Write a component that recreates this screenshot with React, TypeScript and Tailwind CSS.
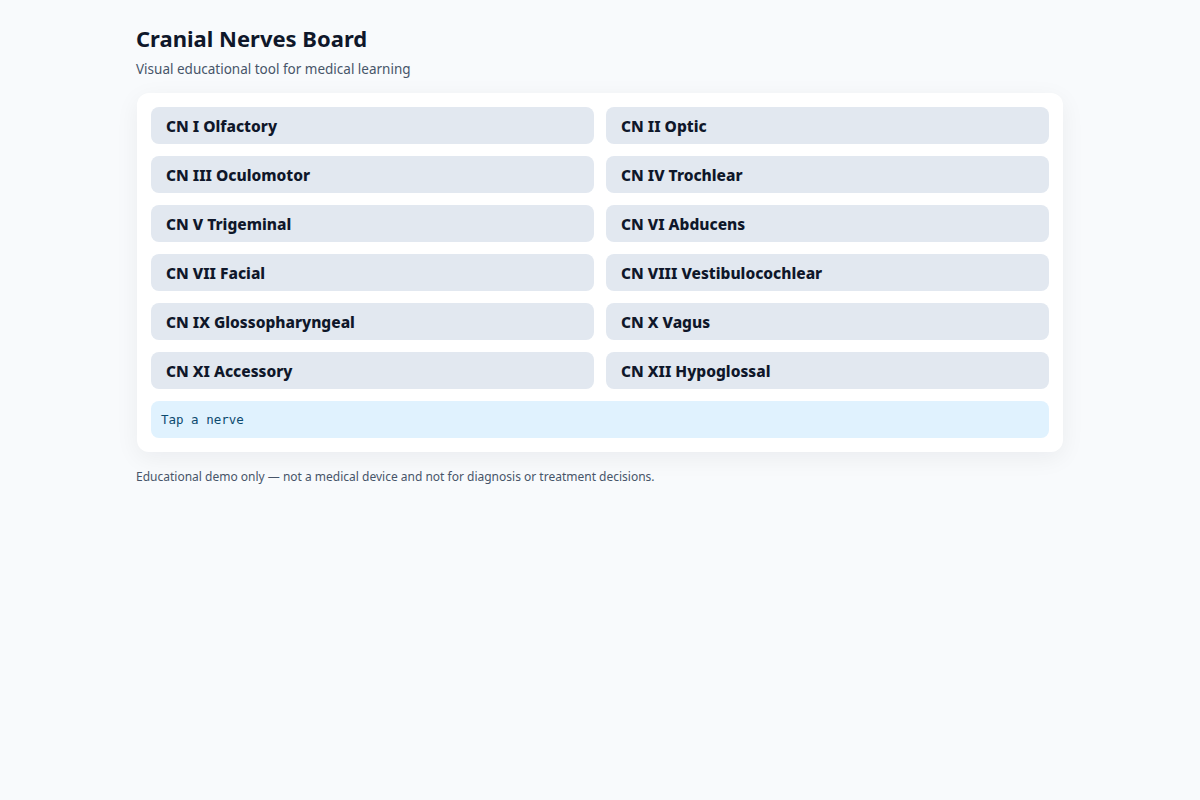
import React, { useState } from 'react';

const nerves = [
  'CN I Olfactory',
  'CN II Optic',
  'CN III Oculomotor',
  'CN IV Trochlear',
  'CN V Trigeminal',
  'CN VI Abducens',
  'CN VII Facial',
  'CN VIII Vestibulocochlear',
  'CN IX Glossopharyngeal',
  'CN X Vagus',
  'CN XI Accessory',
  'CN XII Hypoglossal',
];

export default function App() {
  const [selected, setSelected] = useState<string | null>(null);

  return (
    <div className="min-h-screen bg-[#f8fafc] font-['Noto_Sans',sans-serif] text-[#0f172a]">
      <main className="mx-auto w-[928px] pt-[23px]">
        <h1 className="text-[22px] font-bold leading-[30px]">Cranial Nerves Board</h1>
        <p className="mt-[7px] text-[13.5px] leading-[18px] text-[#475569]">
          Visual educational tool for medical learning
        </p>

        <div className="mx-[1px] mt-[15px] rounded-[12px] bg-white p-[14px] shadow-[0_6px_24px_rgba(15,23,42,0.06)]">
          <div className="grid grid-cols-2 gap-[12px]">
            {nerves.map((name) => (
              <button
                key={name}
                onClick={() => setSelected(name)}
                className="h-[37px] rounded-[8px] bg-[#e2e8f0] px-[15px] pt-[2px] text-left text-[15.5px] font-extrabold text-[#0f172a]"
              >
                {name}
              </button>
            ))}
          </div>
          <div className="mt-[12px] flex h-[37px] items-center rounded-[8px] bg-[#e0f2fe] px-[10px] pt-[2px] font-['DejaVu_Sans_Mono',monospace] text-[12.5px] text-[#0c4a6e]">
            {selected ?? 'Tap a nerve'}
          </div>
        </div>

        <p className="mt-[17px] text-[12px] leading-[16px] text-[#475569]">
          Educational demo only — not a medical device and not for diagnosis or treatment decisions.
        </p>
      </main>
    </div>
  );
}
